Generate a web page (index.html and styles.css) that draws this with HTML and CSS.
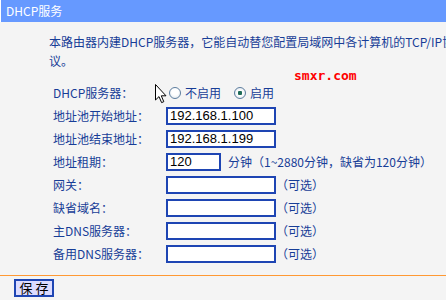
FILE: index.html
```html
<!DOCTYPE html>
<html lang="zh-CN">
<head>
    <meta charset="UTF-8">
    <title>DHCP服务</title>
    <link rel="stylesheet" href="styles.css">
</head>
<body>
    <div class="title-bar">DHCP服务</div>

    <p class="intro">本路由器内建DHCP服务器，它能自动替您配置局域网中各计算机的TCP/IP协议。</p>

    <form class="dhcp-form">
        <label class="field-label">DHCP服务器：</label>
        <div class="field">
            <input type="radio" name="dhcp" id="dhcpOff" class="radio">
            <label for="dhcpOff" class="radio-text">不启用</label>
            <input type="radio" name="dhcp" id="dhcpOn" class="radio radio-on" checked>
            <label for="dhcpOn" class="radio-text">启用</label>
        </div>

        <label class="field-label" for="startIp">地址池开始地址：</label>
        <div class="field"><input type="text" id="startIp" class="text-box" value="192.168.1.100"></div>

        <label class="field-label" for="endIp">地址池结束地址：</label>
        <div class="field"><input type="text" id="endIp" class="text-box" value="192.168.1.199"></div>

        <label class="field-label" for="lease">地址租期：</label>
        <div class="field">
            <input type="text" id="lease" class="text-box short" value="120">
            <span class="hint lease-hint">分钟（1~2880分钟，缺省为120分钟）</span>
        </div>

        <label class="field-label" for="gateway">网关：</label>
        <div class="field"><input type="text" id="gateway" class="text-box"><span class="hint">（可选）</span></div>

        <label class="field-label" for="domain">缺省域名：</label>
        <div class="field"><input type="text" id="domain" class="text-box"><span class="hint">（可选）</span></div>

        <label class="field-label" for="dns1">主DNS服务器：</label>
        <div class="field"><input type="text" id="dns1" class="text-box"><span class="hint">（可选）</span></div>

        <label class="field-label" for="dns2">备用DNS服务器：</label>
        <div class="field"><input type="text" id="dns2" class="text-box"><span class="hint">（可选）</span></div>
    </form>

    <div class="footer-bar">
        <button type="button" class="save-btn">保 存</button>
    </div>

    <div class="watermark">smxr.com</div>

    <!-- mouse pointer captured in the screenshot -->
    <svg class="pointer" width="12" height="20" viewBox="0 0 12 20">
        <path d="M0.5 0.5 L0.5 16 L4 12.6 L6.6 18.6 L8.8 17.7 L6.3 11.8 L11 11.8 Z" fill="#fff" stroke="#000" stroke-width="1"/>
    </svg>
</body>
</html>
```

FILE: styles.css
```css
html, body {
    overflow: hidden;
}

body {
    margin: 0;
    position: relative;
    background-color: #f4f4f4;
    font-family: "Noto Sans CJK SC", "Liberation Sans", sans-serif;
    font-size: 12px;
    color: #173d97;
}

.title-bar {
    height: 22px;
    line-height: 22px;
    padding-left: 5px;
    border-left: 1px solid #fff;
    background-color: #6699ff;
    color: #fff;
}

.intro {
    width: 408px;
    margin: 10px 0 0 49px;
    line-height: 19px;
}

.dhcp-form {
    display: grid;
    grid-template-columns: 113px auto;
    grid-auto-rows: 23px;
    align-items: center;
    margin-top: 11px;
    padding-left: 53px;
}

.field-label {
    white-space: nowrap;
}

.field {
    display: flex;
    align-items: center;
    white-space: nowrap;
}

.radio {
    appearance: none;
    width: 12px;
    height: 12px;
    margin: 0 2px 0 3px;
    border: 1px solid #5d7d9e;
    border-radius: 50%;
    background: radial-gradient(circle at 50% 40%, #ffffff 40%, #d9e2ea 100%);
}

.radio-on {
    margin-left: 13px;
    background: radial-gradient(circle, #1f6b58 0, #1f6b58 2px, #ffffff 2.5px, #d9e2ea 100%);
}

.radio-text {
    margin-left: 2px;
}

.text-box {
    box-sizing: border-box;
    width: 110px;
    height: 18px;
    margin: 0;
    padding: 0 0 0 2px;
    border: 2px solid #1e45b3;
    background-color: #fff;
    font-family: "Liberation Sans", Arial, sans-serif;
    font-size: 13px;
    color: #000;
}

.text-box.short {
    width: 55px;
}

.hint {
    margin-left: 0;
}

.lease-hint {
    margin-left: 7px;
}

.footer-bar {
    margin-top: 10px;
    border-top: 1px solid #ff9933;
    padding: 3px 0 0 14px;
}

.save-btn {
    width: 40px;
    height: 18px;
    padding: 0;
    border: 2px solid #1e45b3;
    background-color: #dcdcff;
    font-family: "Noto Sans CJK SC", sans-serif;
    font-size: 13px;
    line-height: 14px;
    color: #000;
}

.watermark {
    position: absolute;
    left: 294px;
    top: 68px;
    font-family: "DejaVu Sans Mono", monospace;
    font-size: 13px;
    font-weight: bold;
    color: #ff0000;
}

.pointer {
    position: absolute;
    left: 155px;
    top: 84px;
}
```
